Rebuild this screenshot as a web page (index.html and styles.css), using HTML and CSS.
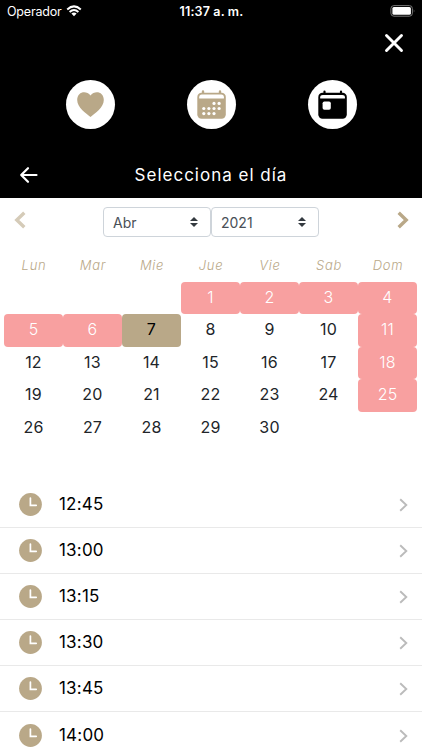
FILE: index.html
```html
<!DOCTYPE html>
<html lang="es">
<head>
<meta charset="utf-8">
<title>Selecciona el día</title>
<link rel="stylesheet" href="styles.css">
</head>
<body>
<header class="header">
  <div class="status">
    <div class="carrier"><span>Operador</span><svg width="16" height="12" viewBox="0 0 16 12"><path d="M1.2 4.4Q8-1.6 14.8 4.4M3.6 6.9Q8 3.1 12.4 6.9" fill="none" stroke="#fff" stroke-width="2"/><path d="M5.4 8.5Q8 6.4 10.6 8.5L8 11.2Z" fill="#fff"/></svg></div>
    <div class="clock">11:37 a. m.</div>
    <svg class="battery" width="26" height="12" viewBox="0 0 26 12"><rect x=".9" y=".6" width="21.5" height="10.6" rx="3" fill="none" stroke="#777"/><rect x="2.4" y="2.1" width="18.5" height="7.6" rx="1.5" fill="#fff"/><path d="M23.8 4.2q1.4 1.7 0 3.4z" fill="#777"/></svg>
  </div>
  <div class="close-row"><svg width="20" height="20" viewBox="0 0 20 20"><path d="M2.5 2.5l15 15M17.5 2.5l-15 15" stroke="#fff" stroke-width="2.9" stroke-linecap="round"/></svg></div>
  <nav class="tabs">
    <a class="tab"><svg width="49" height="49" viewBox="0 0 49 49"><path d="M24.5 37C20 33 11.2 27.7 11.2 20C11.2 11.5 20.3 9.8 24.5 15.5C28.7 9.8 37.8 11.5 37.8 20C37.8 27.7 29 33 24.5 37Z" fill="#b9a888"/></svg></a>
    <a class="tab"><svg width="49" height="49" viewBox="0 0 49 49"><rect x="10.3" y="12.7" width="28.5" height="26" rx="4.2" fill="#b9a888"/><path d="M16 11.5v2M33 11.5v2" stroke="#b9a888" stroke-width="2.4" stroke-linecap="round"/><path d="M12.2 18.5v-1.2q0-2.7 2.7-2.7h19.3q2.7 0 2.7 2.7v1.2z" fill="#fff"/><g fill="#fff"><circle cx="27" cy="23.4" r="1.6"/><circle cx="32.1" cy="23.4" r="1.6"/><circle cx="16.8" cy="28.5" r="1.6"/><circle cx="21.9" cy="28.5" r="1.6"/><circle cx="27" cy="28.5" r="1.6"/><circle cx="32.1" cy="28.5" r="1.6"/><circle cx="16.8" cy="33.6" r="1.6"/><circle cx="21.9" cy="33.6" r="1.6"/><circle cx="27" cy="33.6" r="1.6"/></g></svg></a>
    <a class="tab"><svg width="49" height="49" viewBox="0 0 49 49"><rect x="10.3" y="12.7" width="28.5" height="26" rx="4.2" fill="#000"/><path d="M16.5 11.5v2M33 11.5v2" stroke="#000" stroke-width="2.2" stroke-linecap="round"/><path d="M12.2 18.5v-1.2q0-2.2 2.7-2.2h19.3q2.7 0 2.7 2.2v1.2z" fill="#fff"/><rect x="14.6" y="21.4" width="8.2" height="8.4" rx="1.8" fill="#fff"/></svg></a>
  </nav>
  <div class="title-bar">
    <svg width="20" height="18" viewBox="0 0 20 18"><path d="M17.5 9H2.2M9 2.2L2.2 9 9 15.8" fill="none" stroke="#fff" stroke-width="2.2" stroke-linecap="round" stroke-linejoin="round"/></svg>
    <h1>Selecciona el día</h1>
  </div>
</header>
<main>
  <section class="calendar">
    <div class="picker">
      <svg class="prev" width="12" height="18" viewBox="0 0 12 18"><path d="M10.3 1.7L2.8 9l7.5 7.3" fill="none" stroke="#d5cbb8" stroke-width="3.4"/></svg>
      <div class="selects">
        <div class="select"><span>Abr</span><svg width="8" height="10" viewBox="0 0 8 10"><path d="M0 4l4-4 4 4zM0 6l4 4 4-4z" fill="#343a40"/></svg></div>
        <div class="select"><span>2021</span><svg width="8" height="10" viewBox="0 0 8 10"><path d="M0 4l4-4 4 4zM0 6l4 4 4-4z" fill="#343a40"/></svg></div>
      </div>
      <svg class="next" width="12" height="18" viewBox="0 0 12 18"><path d="M1.7 1.7L9.2 9l-7.5 7.3" fill="none" stroke="#b9a888" stroke-width="3.4"/></svg>
    </div>
    <div class="weekdays"><span>Lun</span><span>Mar</span><span>Mie</span><span>Jue</span><span>Vie</span><span>Sab</span><span>Dom</span></div>
    <div class="days">
      <span class="first off">1</span><span class="off">2</span><span class="off">3</span><span class="off">4</span>
      <span class="off">5</span><span class="off">6</span><span class="selected">7</span><span>8</span><span>9</span><span>10</span><span class="off">11</span>
      <span>12</span><span>13</span><span>14</span><span>15</span><span>16</span><span>17</span><span class="off">18</span>
      <span>19</span><span>20</span><span>21</span><span>22</span><span>23</span><span>24</span><span class="off">25</span>
      <span>26</span><span>27</span><span>28</span><span>29</span><span>30</span>
    </div>
  </section>
  <svg class="symbols" width="0" height="0">
    <symbol id="time" viewBox="0 0 23 23"><circle cx="11.5" cy="11.5" r="11.4" fill="#b9a888"/><path d="M11.4 5v7.3h5.8" fill="none" stroke="#fff" stroke-width="1.7" stroke-linecap="round"/></symbol>
    <symbol id="chevron" viewBox="0 0 9 14"><path d="M1.2 1.2L7.3 7l-6.1 5.8" fill="none" stroke="#bbb" stroke-width="1.9"/></symbol>
  </svg>
  <ul class="times">
    <li><svg class="time-icon"><use href="#time"/></svg><span>12:45</span><svg class="chevron"><use href="#chevron"/></svg></li>
    <li><svg class="time-icon"><use href="#time"/></svg><span>13:00</span><svg class="chevron"><use href="#chevron"/></svg></li>
    <li><svg class="time-icon"><use href="#time"/></svg><span>13:15</span><svg class="chevron"><use href="#chevron"/></svg></li>
    <li><svg class="time-icon"><use href="#time"/></svg><span>13:30</span><svg class="chevron"><use href="#chevron"/></svg></li>
    <li><svg class="time-icon"><use href="#time"/></svg><span>13:45</span><svg class="chevron"><use href="#chevron"/></svg></li>
    <li><svg class="time-icon"><use href="#time"/></svg><span>14:00</span><svg class="chevron"><use href="#chevron"/></svg></li>
  </ul>
</main>
</body>
</html>
```
FILE: styles.css
```css
* { box-sizing: border-box; }
body { margin: 0; height: 750px; overflow: hidden; background: #fff; color: #212529; font-family: Inter, "Liberation Sans", sans-serif; }
svg { display: block; flex: none; }
.header { height: 198px; background: #000; color: #fff; }
.status { height: 22px; display: grid; grid-template-columns: 1fr auto 1fr; align-items: center; padding: 0 6px 0 7px; font-size: 12.5px; }
.carrier { display: flex; align-items: center; gap: 5px; letter-spacing: -.2px; }
.clock { font-weight: 600; letter-spacing: .15px; }
.battery { justify-self: end; }
.close-row { height: 43px; display: flex; justify-content: flex-end; padding: 11px 18px 0 0; }
.tabs { display: flex; justify-content: center; gap: 72px; padding-top: 14.5px; height: 87px; }
.tab { width: 49px; height: 49px; border-radius: 50%; background: #fff; }
.title-bar { height: 46px; display: grid; grid-template-columns: 20px 1fr 20px; align-items: center; padding: 0 19px; }
.title-bar h1 { margin: 0; padding-bottom: 1px; font-size: 17px; font-weight: 400; line-height: 24px; letter-spacing: 1px; text-align: center; }
.calendar { height: 283.5px; padding: 9px 4.5px 0; }
.picker { display: flex; justify-content: space-between; align-items: flex-start; padding: 0 9px; height: 42px; }
.prev, .next { margin-top: 4px; }
.selects { display: flex; }
.select { width: 108px; height: 30px; border: 1px solid #ced4da; border-radius: 4px; display: flex; align-items: center; justify-content: space-between; padding: 0 12px 0 9px; font-size: 14px; color: #495057; }
.weekdays { display: grid; grid-template-columns: repeat(7, 59px); height: 32.5px; line-height: 32px; text-align: center; font-size: 13px; font-style: italic; font-weight: 300; letter-spacing: .7px; color: #b9a888; }
.days { display: grid; grid-template-columns: repeat(7, 59px); grid-auto-rows: 32.6px; margin-left: -.5px; text-align: center; line-height: 31px; font-size: 16px; letter-spacing: .2px; }
.days span { border-radius: 4px; }
.days .first { grid-column: 4; }
.days .off { background: #f8a0a0; color: #fff; font-weight: 300; }
.days .selected { background: #b9a888; color: #000; }
.symbols { position: absolute; }
.times { margin: 0; padding: 0; list-style: none; }
.times li { height: 46.1px; display: flex; align-items: center; padding: 0 14px 0 19px; border-bottom: 1px solid #e9e9e9; color: #000; }
.times span { flex: 1; margin-left: 17px; font-size: 17px; letter-spacing: .2px; }
.time-icon { width: 23px; height: 23px; margin-top: 1px; }
.chevron { width: 9px; height: 14px; margin-top: 2px; }
```
